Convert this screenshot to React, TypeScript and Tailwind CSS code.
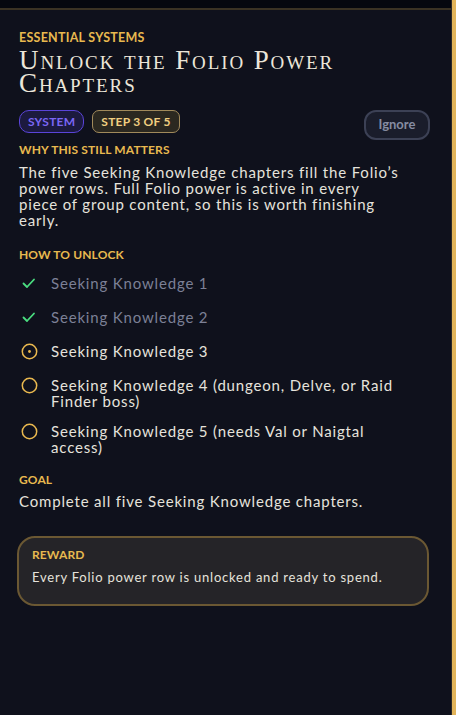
import React from 'react';

type StepState = 'done' | 'current' | 'todo';

interface Step {
  label: string;
  state: StepState;
}

const steps: Step[] = [
  { label: 'Seeking Knowledge 1', state: 'done' },
  { label: 'Seeking Knowledge 2', state: 'done' },
  { label: 'Seeking Knowledge 3', state: 'current' },
  { label: 'Seeking Knowledge 4 (dungeon, Delve, or Raid Finder boss)', state: 'todo' },
  { label: 'Seeking Knowledge 5 (needs Val or Naigtal access)', state: 'todo' },
];

const body = { fontFamily: '"Lato", "Open Sans", sans-serif' };

const StepIcon = ({ state }: { state: StepState }) => {
  if (state === 'done') {
    return (
      <svg width="16" height="16" viewBox="0 0 16 16" fill="none">
        <path d="M2.5 8.5 L6 12 L13 4.5" stroke="#4ade80" strokeWidth="1.8" strokeLinecap="round" strokeLinejoin="round" />
      </svg>
    );
  }
  return (
    <svg width="17" height="17" viewBox="0 0 17 17" fill="none">
      <circle cx="8.5" cy="8.5" r="7.2" stroke="#eab94f" strokeWidth="1.5" />
      {state === 'current' && <circle cx="8.5" cy="8.5" r="1.4" fill="#eab94f" />}
    </svg>
  );
};

const Label = ({ children, className = '' }: { children: React.ReactNode; className?: string }) => (
  <div className={`text-[12px] font-bold uppercase tracking-[0.01em] text-[#e8b94f] leading-[14px] ${className}`} style={body}>
    {children}
  </div>
);

export default function App() {
  return (
    <div className="w-[456px] h-[715px] flex bg-[#06070f] overflow-hidden">
      <div className="flex-1 flex flex-col">
        <div className="h-[8px] bg-[#06070f]" />
        <div className="flex-1 bg-[#0f111c] border-t-2 border-[#3b3224] pl-[19px] pr-[22px] pt-[20px]">
          <div className="text-[12.5px] font-bold uppercase tracking-[0.02em] text-[#e8b94f] leading-[16px]" style={body}>
            Essential Systems
          </div>
          <h1
            className="mt-[3px] text-[27px] leading-[23px] text-[#ece6d9] tracking-[0.07em]"
            style={{ fontFamily: '"Liberation Serif", "DejaVu Serif", serif', fontVariant: 'small-caps' }}
          >
            Unlock the Folio Power Chapters
          </h1>

          <div className="mt-[15px] flex items-start justify-between">
            <div className="flex gap-[8px]">
              <span
                className="h-[23px] px-[8px] flex items-center rounded-[10px] border border-[#5a44d8] bg-[#1c1a3f] text-[12px] font-bold tracking-[0.02em] text-[#7a66f4]"
                style={body}
              >
                SYSTEM
              </span>
              <span
                className="h-[23px] px-[8px] flex items-center rounded-[7px] border border-[#a18a5b] bg-[#2b2820] text-[12px] font-bold tracking-[0.02em] text-[#f1cf80]"
                style={body}
              >
                STEP 3 OF 5
              </span>
            </div>
            <button
              className="h-[30px] w-[66px] -mr-[1px] rounded-[12px] border-2 border-[#3c4155] bg-[#1a1d2b] text-[13px] font-bold text-[#868ca2]"
              style={body}
            >
              Ignore
            </button>
          </div>

          <Label className="mt-[3px]">Why this still matters</Label>
          <p className="mt-[7px] max-w-[382px] text-[15px] leading-[16px] tracking-[0.055em] text-[#e6e3dc]" style={body}>
            The five Seeking Knowledge chapters fill the Folio’s power rows. Full Folio power is active in every piece
            of group content, so this is worth finishing early.
          </p>

          <Label className="mt-[20px]">How to unlock</Label>
          <ul className="mt-[13px] flex flex-col gap-[14px] max-w-[386px]">
            {steps.map((s) => (
              <li key={s.label} className="flex items-start gap-[13px] min-h-[20px]">
                <span className="w-[18px] h-[16px] flex items-center justify-center shrink-0 ml-[1px]">
                  <StepIcon state={s.state} />
                </span>
                <span
                  className={`text-[15px] leading-[16px] tracking-[0.055em] ${
                    s.state === 'done' ? 'text-[#7c8096]' : 'text-[#e6e3dc]'
                  }`}
                  style={body}
                >
                  {s.label}
                </span>
              </li>
            ))}
          </ul>

          <Label className="mt-[18px]">Goal</Label>
          <p className="mt-[6px] text-[15px] leading-[16px] tracking-[0.055em] text-[#e6e3dc]" style={body}>
            Complete all five Seeking Knowledge chapters.
          </p>

          <div className="mt-[27px] -ml-[2px] h-[70px] rounded-[18px] border-2 border-[#6b5833] bg-[#252428] px-[13px] pt-[10px]">
            <Label>Reward</Label>
            <p className="mt-[7px] text-[13px] leading-[16px] tracking-[0.06em] text-[#e6e3dc]" style={body}>
              Every Folio power row is unlocked and ready to spend.
            </p>
          </div>
        </div>
      </div>
      <div className="w-[5px] h-full flex">
        <div className="w-[1px] bg-[#2d2a28]" />
        <div className="flex-1 bg-[#e2b45a]" />
      </div>
    </div>
  );
}
